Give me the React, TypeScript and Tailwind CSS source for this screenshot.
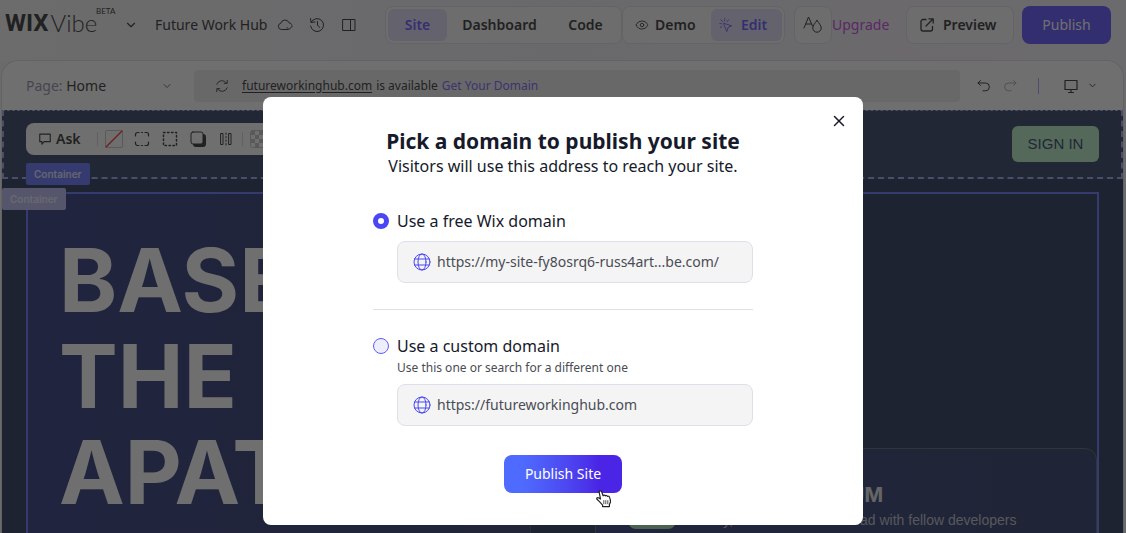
import { useState } from "react";
import type { ReactNode } from "react";
import clsx from "clsx";
import { ChevronDown, Eye, X } from "lucide-react";

interface IconProps {
  className?: string;
  viewBox?: string;
  children: ReactNode;
}

function Icon({ className = "size-4", viewBox = "0 0 16 16", children }: IconProps) {
  return (
    <svg
      className={clsx("shrink-0", className)}
      viewBox={viewBox}
      fill="none"
      stroke="currentColor"
      strokeLinecap="round"
      strokeLinejoin="round"
      aria-hidden="true"
    >
      {children}
    </svg>
  );
}

function GlobeIcon() {
  return (
    <Icon className="size-[18px] text-[#4a48f2]" viewBox="0 0 18 18">
      <circle cx="9" cy="9" r="8" />
      <ellipse cx="9" cy="9" rx="4" ry="8" />
      <path d="M1.500 6h15M1.500 12h15" />
    </Icon>
  );
}

function HandCursor() {
  return (
    <svg
      className="absolute top-[35px] left-[92px] h-[18px] w-4"
      viewBox="0 0 16 18"
      fill="#fff"
      stroke="#222"
      strokeWidth="1.2"
      strokeLinejoin="round"
      aria-hidden="true"
    >
      <path d="M3.200 2.400c-.3-1.700 1.900-2.200 2.500-.6l1.400 4c.4-1 1.900-.9 2.200.1.600-.8 1.900-.5 2.100.5.700-.5 1.900-.1 2.100.8.600 1.700 1.400 3.600.8 5.400l-.9 2v2H6.600v-1.500L3.500 11.600 1 9.300C.2 8.200 1.400 7.200 2.500 7.800l2 1.200z" />
      <path d="M7.800 10.200v4M9.800 10.200v4M11.800 10.200v4" strokeWidth=".8" />
    </svg>
  );
}

function TopBar() {
  return (
    <header className="flex h-[61px] shrink-0 items-start bg-linear-to-r from-[#f7f7f7] via-[#f1f0f7] to-[#f6f2f7] pt-1.5 pr-[15px] pl-[5px] text-[#3d3d3d]">
      <div className="flex h-[38px] flex-1 items-center">
        <div className="relative flex w-[119px] items-center pb-1 leading-8">
          <span className="font-['Roboto',sans-serif] text-2xl leading-8 font-bold">WIX</span>
          <span className="pl-0.5 font-['Lato',sans-serif] text-2xl leading-8 font-light">Vibe</span>
          <span className="absolute -top-0.5 left-[91px] font-['Lato',sans-serif] text-[8px] leading-3">BETA</span>
        </div>
        <button type="button" aria-label="Open menu">
          <ChevronDown size={14} strokeWidth={2} />
        </button>
        <span className="pr-2.5 pl-[17px] text-sm whitespace-nowrap">Future Work Hub</span>
        <div className="flex items-center gap-4">
          <Icon>
            <path d="M11 12.500H4.200a3.200 3.200 0 0 1-.3-6.300 4.200 4.200 0 0 1 8-.5c1.600.2 2.800 1.200 3 2.500M10 10.500l2 2 3.500-3.500" />
          </Icon>
          <Icon>
            <path d="M2.200 5.200a6.500 6.500 0 1 1-.6 3.800M1.500 1.500l.5 4 4-.5M8.500 4.500V8l2.200 2.500" />
          </Icon>
          <Icon>
            <path d="M2 2.500h12v11H2zM9.500 2.500v11" />
          </Icon>
        </div>
      </div>

      <div className="flex h-[38px] items-center rounded-lg border border-[#e3e3e8] bg-[#f9f9fb] p-0.5 text-sm font-semibold">
        <button type="button" className="h-8 w-[59px] rounded-md bg-[#e4e1fa] text-[#6f5fff]">
          Site
        </button>
        <button type="button" className="w-[105px]">Dashboard</button>
        <button type="button" className="w-[67px]">Code</button>
      </div>
      <div className="flex h-[38px] items-center rounded-lg border border-[#e3e3e8] bg-[#f9f9fb] p-0.5 text-sm font-semibold">
        <button type="button" className="flex w-[86px] items-center gap-1.5 pl-2.5">
          <Eye size={14} strokeWidth={1.5} />
          Demo
        </button>
        <button
          type="button"
          className="flex h-8 w-[71px] items-center gap-2 rounded-md bg-[#e4e1fa] pl-2 text-[#6f5fff]"
        >
          <Icon className="size-[14px]">
            <path d="M5.500 6l9 3-4 1.500-1.500 4.500zM6.500.8v2.700M2 2l2 2M.8 6.500h2.200M1.500 11l2-1.500M11 2L9.500 4" />
          </Icon>
          Edit
        </button>
      </div>

      <div className="flex h-[38px] items-center pl-[9px]">
        <button
          type="button"
          aria-label="Site styles"
          className="flex size-[38px] items-center justify-center rounded-lg border border-[#e3e3e8] bg-[#f9f9fb]"
        >
          <Icon className="size-5" viewBox="0 0 20 20">
            <path d="M1 13L5.500 2l4 9M3 9h5.500M14 5.500c-2.600 3.300-4.200 5.400-4.200 7.500a4.200 4.200 0 0 0 8.400 0c0-2.100-1.600-4.200-4.200-7.500z" />
          </Icon>
        </button>
        <a href="#upgrade" className="w-[74px] text-sm text-[#cd4fe8]">
          Upgrade
        </a>
        <button
          type="button"
          className="flex h-[38px] w-[108px] items-center gap-2 rounded-lg border border-[#e3e3e8] bg-[#f9f9fb] pl-3 text-sm font-semibold"
        >
          <Icon>
            <path d="M7 2.500H4A2 2 0 0 0 2 4.500v7.500a2 2 0 0 0 2 2h7.500a2 2 0 0 0 2-2V9.500M7 9l7-7M10 1.800h4.200V6" strokeWidth="1.300" />
          </Icon>
          Preview
        </button>
        <button type="button" className="ml-2 h-[38px] w-[89px] rounded-lg bg-[#6a5eff] text-sm text-white">
          Publish
        </button>
      </div>
    </header>
  );
}

function PageBar() {
  return (
    <div className="flex h-[49px] items-center text-[#3d3d3d]">
      <button type="button" className="flex w-[171px] items-center justify-between pl-6 text-sm">
        <span>
          <span className="text-[#9a98b0]">Page:</span> Home
        </span>
        <ChevronDown size={12} strokeWidth={1.5} />
      </button>
      <div className="ml-[21px] flex h-8 flex-1 items-center rounded bg-[#eeeeee] pl-[21px] text-xs">
        <Icon className="size-[14px]">
          <path d="M2 6a6.300 6.300 0 0 1 11-1.500M14 1.500v3.500h-3.500M14 10a6.300 6.300 0 0 1-11 1.500M2 14.500V11h3.500" />
        </Icon>
        <a href="#domain" className="ml-[13px] underline underline-offset-2">
          futureworkinghub.com
        </a>
        <span className="ml-1">is available</span>
        <a href="#get-domain" className="ml-1 text-[#7a6cff]">
          Get Your Domain
        </a>
      </div>
      <div className="flex items-center pr-[25px] pl-4">
        <button type="button" aria-label="Undo">
          <Icon>
            <path d="M4.500 2.500L2 5l2.500 2.500M2 5h7.500a3.800 3.800 0 0 1 0 7.800H7" />
          </Icon>
        </button>
        <button type="button" aria-label="Redo" className="ml-2.5 text-[#b5b5b5]">
          <Icon>
            <path d="M11.500 2.500L14 5l-2.500 2.500M14 5H6.500a3.800 3.800 0 0 0 0 7.800H9" />
          </Icon>
        </button>
        <span className="ml-5 h-4 w-px bg-[#aaaaff]" />
        <button type="button" aria-label="Device" className="ml-6 flex items-center gap-2">
          <Icon>
            <path d="M2 2.500h12v9H2zM8 11.500v3M5.500 14.500h5" strokeWidth="1.200" />
          </Icon>
          <ChevronDown size={11} strokeWidth={2} />
        </button>
      </div>
    </div>
  );
}

function AskToolbar() {
  return (
    <div className="flex h-8 w-[300px] items-center rounded-lg bg-white pl-3 text-[#3d3d3d]">
      <button type="button" className="flex items-center gap-1 text-sm font-semibold">
        <Icon className="size-[14px]">
          <path d="M2 2.500h12v8.500H7L4.500 14v-3H2z" strokeWidth="1.300" />
        </Icon>
        Ask
      </button>
      <span className="mr-[7px] ml-4 h-[14px] w-px bg-[#dddddd]" />
      <Icon className="size-[18px] text-[#c8c8c8]" viewBox="0 0 18 18">
        <rect x=".5" y=".5" width="17" height="17" rx="1.500" />
        <path d="M1 17L17 1" stroke="#ff3030" strokeWidth="1.300" />
      </Icon>
      <Icon className="ml-[11px] size-4">
        <path d="M1.500 5V3.500a2 2 0 0 1 2-2H5M11 1.500h1.500a2 2 0 0 1 2 2V5M14.500 11v1.500a2 2 0 0 1-2 2H11M5 14.500H3.500a2 2 0 0 1-2-2V11M7.500 1.500h1M7.500 14.500h1" strokeWidth="1.200" />
      </Icon>
      <Icon className="ml-3 size-4">
        <rect x="1.500" y="1.500" width="13" height="13" strokeWidth="1.500" strokeDasharray="1.500 2.500" />
      </Icon>
      <Icon className="ml-3 size-4">
        <rect x="3.500" y="3.500" width="12" height="12" rx="2" fill="currentColor" />
        <rect x="1" y="1" width="12" height="12" rx="2" fill="#fff" />
      </Icon>
      <Icon className="ml-3 size-4">
        <path d="M3 2.500h2v11H3zM11 2.500h2v11h-2z" />
        <path d="M8 2v12" strokeDasharray="1.500 2" />
      </Icon>
      <span className="mr-[7px] ml-2 h-[14px] w-px bg-[#dddddd]" />
      <Icon className="size-[18px] text-[#c8c8c8]" viewBox="0 0 18 18">
        <path
          d="M1 1h4v4H1zM9 1h4v4H9zM5 5h4v4H5zM13 5h4v4h-4zM1 9h4v4H1zM9 9h4v4H9zM5 13h4v4H5zM13 13h4v4h-4z"
          fill="currentColor"
          stroke="none"
        />
        <rect x=".5" y=".5" width="17" height="17" rx="2" />
      </Icon>
    </div>
  );
}

function SitePreview() {
  return (
    <main className="relative flex flex-1 flex-col bg-[#344361]">
      <div className="flex h-[69px] shrink-0 items-start justify-between border-2 border-t border-dashed border-[#a8aaec] bg-[#3c4b6e] px-[22px]">
        <div className="pt-3">
          <AskToolbar />
        </div>
        <button
          type="button"
          className="mt-[15px] h-9 w-[87px] rounded-md bg-[#bbf0ca] font-['Liberation_Sans',sans-serif] text-[15px] text-[#3c4b6e]"
        >
          SIGN IN
        </button>
      </div>
      <span className="absolute top-[53px] left-6 rounded-xs bg-[#6e7aff] px-2 font-['Inter',sans-serif] text-[10px] leading-[22px] font-semibold text-[#e6e6ff]">
        Container
      </span>
      <span className="absolute top-[78px] left-0 z-10 rounded-xs bg-[#bec0f8] px-2 font-['Inter',sans-serif] text-[10px] leading-[22px] font-semibold text-[#ededff]">
        Container
      </span>

      <section className="mx-6 mt-[13px] grid flex-1 grid-cols-2 gap-16 border-2 border-b-0 border-[#6e7aff]">
        <div className="border-r border-[#4d5c78] bg-linear-to-r from-[#3b4486] to-[#3c4672] pt-[38px] pl-[31px]">
          <h1 className="font-['Inter',sans-serif] text-[88px] leading-24 font-bold text-white">
            BASE
            <br />
            THE
            <br />
            APAT
          </h1>
        </div>
        <div className="pt-[254px]">
          <article className="flex h-40 gap-[19px] rounded-t-xl border border-[#5c7070] bg-linear-to-r from-[#3e4784] to-[#384670] pt-8 pl-8">
            <span className="size-12 shrink-0 rounded-lg bg-[#a9dcb4]" />
            <div className="font-['Liberation_Sans',sans-serif]">
              <h2 className="pl-[115px] font-['Inter',sans-serif] text-xl leading-7 font-bold text-[#e6e6e6]">FORUM</h2>
              <p className="text-sm leading-[22px] whitespace-nowrap text-[#c2c4d0]">Study, create and look ahead with fellow developers</p>
            </div>
          </article>
        </div>
      </section>
    </main>
  );
}

const radioClass =
  "size-4 shrink-0 appearance-none rounded-full border border-[#5f5cf5] bg-[#eeeeff] checked:border-5 checked:border-[#4a45f5] checked:bg-white";

function PublishDialog() {
  const [domain, setDomain] = useState("free");

  return (
    <div
      role="dialog"
      aria-modal="true"
      aria-labelledby="dialog-title"
      className="relative flex w-full max-w-[600px] flex-col items-center rounded-lg bg-white pt-[30px] pb-8 text-[#161a2b]"
    >
      <button type="button" aria-label="Close" className="absolute top-[15px] right-[15px]">
        <X size={18} strokeWidth={2} />
      </button>
      <h2 id="dialog-title" className="text-[21px] leading-7 font-bold">
        Pick a domain to publish your site
      </h2>
      <p className="leading-[22px]">Visitors will use this address to reach your site.</p>

      <form className="mt-8 flex w-[380px] flex-col" onSubmit={(e) => e.preventDefault()}>
        <label className="flex h-6 items-center gap-2">
          <input
            type="radio"
            name="domain"
            className={radioClass}
            checked={domain === "free"}
            onChange={() => setDomain("free")}
          />
          Use a free Wix domain
        </label>
        <div className="mt-2 ml-6 flex h-[42px] items-center gap-1.5 rounded-lg border border-[#dfdfea] bg-[#f4f4f4] px-[15px]">
          <GlobeIcon />
          <input
            aria-label="Free Wix domain"
            readOnly
            className="min-w-0 flex-1 text-sm text-[#4a4c55] outline-none"
            value="https://my-site-fy8osrq6-russ4art...be.com/"
          />
        </div>

        <hr className="mt-[26px] border-[#dfdfe3]" />

        <label className="mt-6 flex h-6 items-center gap-2">
          <input
            type="radio"
            name="domain"
            className={radioClass}
            checked={domain === "custom"}
            onChange={() => setDomain("custom")}
          />
          Use a custom domain
        </label>
        <p className="ml-6 text-xs leading-5 text-[#4a4c55]">Use this one or search for a different one</p>
        <div className="mt-1.5 ml-6 flex h-[42px] items-center gap-1.5 rounded-lg border border-[#dfdfea] bg-[#f4f4f4] px-[15px]">
          <GlobeIcon />
          <input
            aria-label="Custom domain"
            readOnly
            className="min-w-0 flex-1 text-sm text-[#4a4c55] outline-none"
            value="https://futureworkinghub.com"
          />
        </div>

        <div className="relative mt-[29px] self-center">
          <button
            type="submit"
            className="h-[38px] w-[118px] cursor-pointer rounded-lg bg-linear-to-r from-[#4f6bff] from-15% to-[#4a25e6] to-80% text-sm text-white"
          >
            Publish Site
          </button>
          <HandCursor />
        </div>
      </form>
    </div>
  );
}

export default function App() {
  return (
    <div className="flex h-screen flex-col overflow-hidden bg-[#f4f3f7] font-['Noto_Sans',sans-serif]">
      <TopBar />
      {/* editor canvas */}
      <div className="mr-[3px] ml-0.5 flex flex-1 flex-col rounded-t-2xl bg-white ring-1 ring-[#e2e2e6]">
        <PageBar />
        <SitePreview />
      </div>

      {/* dimmed backdrop */}
      <div className="fixed inset-0 z-20 flex items-start justify-center bg-[#0f0f0f]/60 pt-[97px]">
        <PublishDialog />
      </div>
    </div>
  );
}
